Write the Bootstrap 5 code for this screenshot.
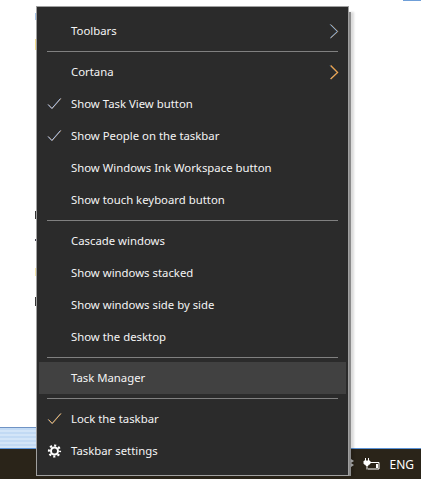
<!DOCTYPE html>
<html lang="en">
<head>
<meta charset="UTF-8">
<title>Taskbar menu</title>
<link href="https://cdn.jsdelivr.net/npm/bootstrap@5.3.0/dist/css/bootstrap.min.css" rel="stylesheet">
<style>
html, body { height: 484px; width: 430px; overflow: hidden; background: #fff; }
.desk { position: relative; width: 421px; height: 479px; }
.glass { width: 351px; height: 21px; background: repeating-linear-gradient(0deg, #d3e5f8 0 2px, #c2daf4 2px 4px); border-top: 1px solid #6f93c4; }
.tray { height: 31px; background: #2a2419; border-top: 1px solid #5b93d6; color: #fff; font: 12px "Noto Sans", sans-serif; padding-right: 7px; gap: 9px; }
.ctx { position: absolute; left: 36px; top: 6px; width: 313px; height: 470px; padding: 8px 2px; background: #2b2b2b; border: 1px solid #a0a0a0; box-shadow: 5px 3px 0 -3px #8a8a8a, 8px 3px 2px -3px rgba(0,0,0,.14); color: #f4f4f4; font: 11.35px "Noto Sans", sans-serif; }
.ctx-row { height: 32px; position: relative; padding-left: 32px; padding-bottom: 2px; }
.ctx-row.hot { background: #414141; }
.ctx-sep { height: 1px; margin: 4px 8px; background: #808080; }
.ctx-ico { position: absolute; left: 8px; top: 9px; }
.ctx-arrow { position: absolute; right: 7px; top: 8px; }
.scrap { position: absolute; left: 35px; width: 1px; }
</style>
</head>
<body>
<svg width="0" height="0" class="position-absolute">
  <symbol id="chev-blue" viewBox="0 0 10 16">
    <path d="M1.900 1.500l7 7-7 6.500" fill="none" stroke="#f0a040" stroke-width=".7"/>
    <path d="M1.300 1.500l7 7-7 6.500" fill="none" stroke="#8fbdf2"/>
  </symbol>
  <symbol id="chev-orange" viewBox="0 0 10 16">
    <path d="M1.100 1.500l7 7-7 6.500" fill="none" stroke="#5f9ee8" stroke-width=".6"/>
    <path d="M1.700 1.500l7 7-7 6.500" fill="none" stroke="#f5a64a" stroke-width="1.100"/>
  </symbol>
  <symbol id="tick-blue" viewBox="0 0 15 14">
    <path d="M1.500 7.500l3.800 4 8.700-10" fill="none" stroke="#e8a860" stroke-width=".6"/>
    <path d="M1 7.500l3.800 4 8.700-10" fill="none" stroke="#a9c4f2"/>
  </symbol>
  <symbol id="tick-orange" viewBox="0 0 15 14">
    <path d="M1 7.500l3.800 4 8.700-10" fill="none" stroke="#7fb0f0" stroke-width=".6"/>
    <path d="M1.500 7.500l3.800 4 8.700-10" fill="none" stroke="#f5b560"/>
  </symbol>
</svg>
<div class="desk d-flex flex-column justify-content-end">
  <span class="scrap" style="top:13px;height:7px;background:#a9c6ea"></span>
  <span class="scrap" style="top:39px;height:11px;background:#f2dc8c"></span>
  <span class="scrap" style="top:211px;height:8px;background:#333"></span>
  <span class="scrap" style="top:239px;height:2px;background:#445"></span>
  <span class="scrap" style="top:268px;height:8px;background:#f5e6a8"></span>
  <span class="scrap" style="top:297px;height:9px;background:#333"></span>
  <span class="position-absolute" style="left:403px;top:0;width:18px;height:1px;background:#6f9fd8"></span>
  <div class="glass"></div>
  <div class="tray d-flex justify-content-end align-items-center">
    <svg width="6" height="10" viewBox="0 0 6 10" fill="#b8b8b8"><path d="M0 0h3l3 2-3 2 3 2-3 2-3 2z"/></svg>
    <svg width="17" height="12" viewBox="0 0 17 12" fill="none" stroke="#fff"><path d="M2.500 0v3M5.500 0v3"/><path d="M1 3h6v2.500l-2 2h-2l-2-2z" fill="#fff"/><path d="M4 7.500v4M7 4.500h9v6.500h-11"/><rect x="13" y="6" width="2" height="4" fill="#fff" stroke="none"/></svg>
    <span>ENG</span>
  </div>
  <div class="ctx d-flex flex-column">
    <div class="ctx-row d-flex align-items-center">Toolbars<svg class="ctx-arrow" width="10" height="16"><use href="#chev-blue"/></svg></div>
    <div class="ctx-sep"></div>
    <div class="ctx-row d-flex align-items-center">Cortana<svg class="ctx-arrow" width="10" height="16"><use href="#chev-orange"/></svg></div>
    <div class="ctx-row d-flex align-items-center"><svg class="ctx-ico" width="15" height="14"><use href="#tick-blue"/></svg>Show Task View button</div>
    <div class="ctx-row d-flex align-items-center"><svg class="ctx-ico" width="15" height="14"><use href="#tick-blue"/></svg>Show People on the taskbar</div>
    <div class="ctx-row d-flex align-items-center">Show Windows Ink Workspace button</div>
    <div class="ctx-row d-flex align-items-center">Show touch keyboard button</div>
    <div class="ctx-sep"></div>
    <div class="ctx-row d-flex align-items-center">Cascade windows</div>
    <div class="ctx-row d-flex align-items-center">Show windows stacked</div>
    <div class="ctx-row d-flex align-items-center">Show windows side by side</div>
    <div class="ctx-row d-flex align-items-center">Show the desktop</div>
    <div class="ctx-sep"></div>
    <div class="ctx-row hot d-flex align-items-center">Task Manager</div>
    <div class="ctx-sep"></div>
    <div class="ctx-row d-flex align-items-center"><svg class="ctx-ico" width="15" height="14"><use href="#tick-orange"/></svg>Lock the taskbar</div>
    <div class="ctx-row d-flex align-items-center"><svg class="ctx-ico" width="15" height="14" viewBox="0 0 14 14" fill="none" stroke="#fff"><circle cx="7" cy="7" r="3.500" stroke-width="2"/><circle cx="7" cy="7" r="5.500" stroke-width="2.200" stroke-dasharray="2.160 2.160" stroke-dashoffset="1.080"/></svg>Taskbar settings</div>
  </div>
</div>
<script src="https://cdn.jsdelivr.net/npm/bootstrap@5.3.0/dist/js/bootstrap.bundle.min.js"></script>
</body>
</html>
